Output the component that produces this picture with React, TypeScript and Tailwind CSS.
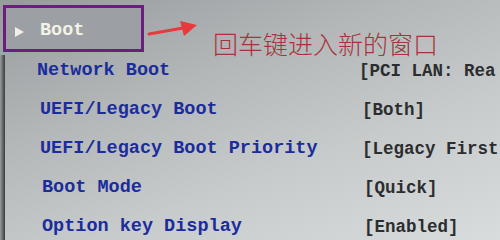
export default function App() {
  const rows = [
    { label: "Network Boot", value: "[PCI LAN: Rea", pl: "pl-[37px]" },
    { label: "UEFI/Legacy Boot", value: "[Both]", pl: "pl-[40px]" },
    { label: "UEFI/Legacy Boot Priority", value: "[Legacy First", pl: "pl-[40px]" },
    { label: "Boot Mode", value: "[Quick]", pl: "pl-[42px]" },
    { label: "Option key Display", value: "[Enabled]", pl: "pl-[42px]" },
  ];

  return (
    <div className="w-[500px] h-[240px] overflow-hidden relative bg-[linear-gradient(160deg,#989b9e_0%,#b3b7b8_35%,#c8cbcb_65%,#d9dcdc_100%)] font-['Liberation_Mono',monospace]">
      {/* bezel edge */}
      <div className="absolute left-0 top-[55px] bottom-0 w-[5px] bg-[linear-gradient(90deg,#9a9d9d,#3a3c3c)]" />

      {/* header */}
      <div className="flex items-start pt-[5px] pl-[3px]">
        <div className="w-[141px] h-[47px] border-[3px] border-[#6b1f7a] bg-[#9c9fa3] flex items-center pl-[9px] pt-[6px]">
          <svg width="9" height="10" viewBox="0 0 9 10">
            <path d="M0 0 L9 5 L0 10 Z" fill="#f2f0e4" />
          </svg>
          <span className="ml-[16px] text-[#f4f2e6] font-bold text-[18.5px] leading-none">Boot</span>
        </div>
        <svg width="52" height="22" viewBox="0 0 52 22" className="mt-[12px] ml-[3px]">
          <path d="M2 17 L36 11" stroke="#e8393c" strokeWidth="3" strokeLinecap="round" />
          <path d="M33 4 L50 8 L37 19 Z" fill="#e8393c" />
        </svg>
        <span className="ml-[14px] mt-[22px] text-[25px] leading-[32px] text-[#a8323b] font-['Noto_Sans_CJK_SC',sans-serif] font-light">
          回车键进入新的窗口
        </span>
      </div>

      {/* rows */}
      <div className="flex flex-col -mt-[7px]">
        {rows.map((r) => (
          <div key={r.label} className={`h-[39px] flex items-center ${r.pl}`}>
            <span className="w-[322px] shrink-0 text-[18.5px] font-bold text-[#1b2c9c] whitespace-pre leading-none">
              {r.label}
            </span>
            <span className="text-[17.5px] font-bold text-[#2b2d2f] whitespace-pre leading-none">
              {r.value}
            </span>
          </div>
        ))}
      </div>
    </div>
  );
}
